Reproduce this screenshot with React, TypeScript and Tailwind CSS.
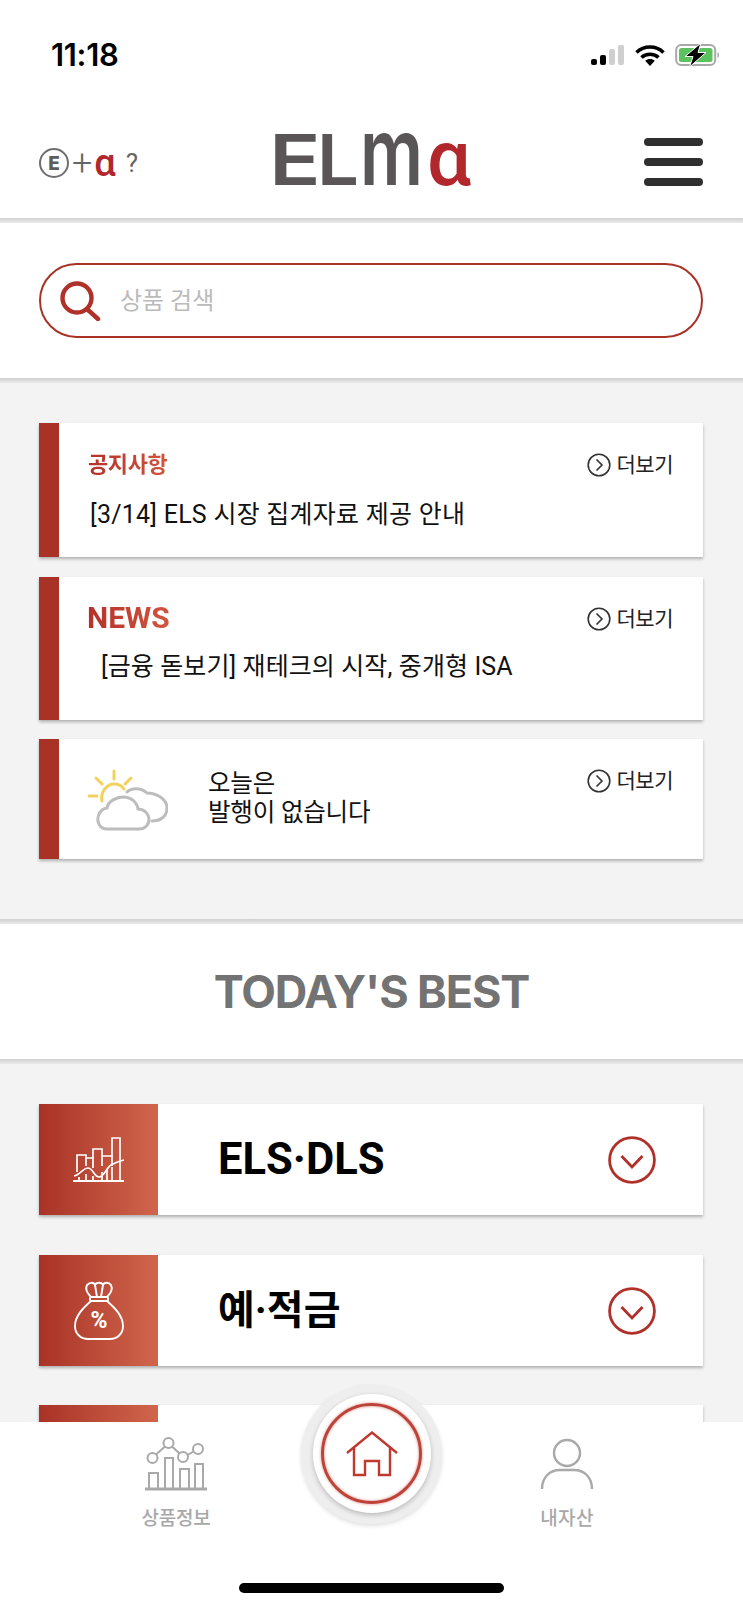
import React from "react";

function Wifi() {
  return (
    <svg width="30" height="21" viewBox="0 0 30 21" fill="none" stroke="#000" strokeWidth="3.6">
      <path d="M1.5 7.5C9 0.2 21 0.2 28.5 7.5" />
      <path d="M6.5 12.5C11 8.2 19 8.2 23.5 12.5" />
      <path d="M15 21l-4.8-5.2c2.6-2.4 7-2.4 9.6 0z" fill="#000" stroke="none" />
    </svg>
  );
}

function Battery() {
  return (
    <svg width="46" height="24" viewBox="0 0 46 24" fill="none">
      <rect x="1.2" y="2" width="39" height="20" rx="5" stroke="#a8a8a8" strokeWidth="2" />
      <rect x="4" y="5" width="33.5" height="14" rx="2.5" fill="#5cc25f" />
      <path d="M42.5 9c2 .6 2 5.4 0 6z" fill="#a8a8a8" />
      <path d="M26 0L10 13.5h8L14.5 24 31 9.5h-8z" fill="#000" stroke="#fff" strokeWidth="1" />
    </svg>
  );
}

function MoreLink() {
  return (
    <div className="flex items-center gap-[6px] text-[21px] leading-[24px] text-[#222]">
      <svg width="24" height="24" viewBox="0 0 24 24" fill="none" stroke="#333" strokeWidth="1.6">
        <circle cx="12" cy="12" r="10.8" />
        <path d="M9.5 6.5l5.5 5.5-5.5 5.5" />
      </svg>
      <span className="tracking-[-0.5px]">더보기</span>
    </div>
  );
}

function Divider() {
  return <div className="h-[5px] bg-linear-to-b from-[#d0d0d0] to-[#ebebeb]" />;
}

function Card({ className, children }: { className: string; children: React.ReactNode }) {
  return (
    <div className={`flex bg-white shadow-[0_2px_3px_rgba(0,0,0,0.28)] ${className}`}>
      <div className="w-[20px] shrink-0 bg-[#a93226]" />
      <div className="flex-1">{children}</div>
    </div>
  );
}

function ChartIcon() {
  return (
    <svg width="51" height="46" viewBox="0 0 51 46" fill="none" stroke="#fff" strokeWidth="1.7">
      <path d="M0 44h51" strokeWidth="2.2" />
      <path d="M4 35V18h9v3h7V12h9v7h10V1h8v43" />
      <path d="M13 21v8M20 21v10M29 19v10M39 19v10" />
      <path d="M6 40v4M13 37v7M20 39v5M29 35v9M34 33v11M39 30v14" />
      <path d="M1 39c6-1 9-8 14-8s6 9 11 9 8-10 12-12 7-4 13-5" />
    </svg>
  );
}

function BagIcon() {
  return (
    <svg width="50" height="59" viewBox="0 0 50 59" fill="none" stroke="#fff" strokeWidth="1.9" strokeLinejoin="round">
      <path d="M17 16c-3-3-6-8-4-12 3-3 7-3 8 0 1-3 7-3 8 0 1-3 6-3 8 0 2 4-1 9-4 12" />
      <path d="M21 4l2 12M29 4l-2 12" />
      <rect x="16" y="16" width="18" height="4" rx="1" />
      <path d="M17 20C9 27 1 35 1 45c0 8 6 13 13 13h22c7 0 13-5 13-13 0-10-8-18-16-25" />
      <text x="25" y="47" textAnchor="middle" fill="#fff" stroke="none" fontSize="23" fontWeight="700" fontFamily="Roboto, sans-serif">%</text>
    </svg>
  );
}

function Chevron() {
  return (
    <svg width="48" height="48" viewBox="0 0 48 48" fill="none" stroke="#b0302a" strokeWidth="2.8">
      <circle cx="24" cy="24" r="22.4" />
      <path d="M13.5 20L24 31l10.5-11" />
    </svg>
  );
}

function BestCard({ icon, label, className, labelClass }: { icon: React.ReactNode; label: string; className: string; labelClass: string }) {
  return (
    <div className={`flex h-[111px] shrink-0 bg-white shadow-[0_2px_3px_rgba(0,0,0,0.28)] ${className}`}>
      <div className="flex w-[119px] shrink-0 items-center justify-center bg-linear-to-r from-[#a93226] to-[#d0654c]">{icon}</div>
      <div className="flex flex-1 items-center justify-between pl-[60px] pr-[47px]">
        <span className={`font-bold leading-none text-black ${labelClass}`}>{label}</span>
        <Chevron />
      </div>
    </div>
  );
}

export default function App() {
  return (
    <div className="relative h-[1609px] w-[743px] overflow-hidden bg-white font-[Roboto,'Noto_Sans_CJK_KR',sans-serif]">
      {/* status bar */}
      <div className="flex h-[108px] items-start justify-between pl-[51px] pr-[22px] pt-[38px]">
        <span className="font-[Inter] text-[31px] font-semibold leading-[34px] tracking-[-0.3px] text-black">11:18</span>
        <div className="flex items-center pt-[5px]">
          <div className="flex items-end gap-[3px]">
            <div className="h-[6px] w-[6px] rounded-[2px] bg-black" />
            <div className="h-[10px] w-[6px] rounded-[2px] bg-black" />
            <div className="h-[16px] w-[6px] rounded-[2px] bg-[#cfcfcf]" />
            <div className="h-[20px] w-[6px] rounded-[2px] bg-[#cfcfcf]" />
          </div>
          <div className="ml-[11px]"><Wifi /></div>
          <div className="ml-[10px]"><Battery /></div>
        </div>
      </div>

      {/* header */}
      <div className="flex h-[110px] items-start pl-[39px] pr-[40px]">
        <div className="flex w-[230px] items-center pt-[40px]">
          <div className="flex h-[30px] w-[30px] items-center justify-center rounded-full border-2 border-[#6e6e6e] font-[Inter] text-[19px] font-extrabold leading-none text-[#5c5c5c]">E</div>
          <span className="ml-[3px] text-[36px] font-light leading-[30px] text-[#666]">+</span>
          <span className="ml-[2px] text-[38px] font-medium leading-[30px] text-[#b1272b]">α</span>
          <span className="ml-[10px] text-[26px] leading-[30px] text-[#666]">?</span>
        </div>
        <div className="flex w-[210px] items-baseline pt-[16px] font-[Inter] text-[70px] font-semibold leading-[70px] text-[#5a5556]">
          <span className="inline-block w-[48px] origin-[0%_86%] scale-x-[1.22]">E</span>
          <span className="inline-block w-[43px] origin-[0%_86%] scale-x-[1.06]">L</span>
          <span className="inline-block w-[67px] origin-[0%_86%] scale-y-[1.33]">m</span>
          <span className="font-[Roboto] text-[78px] font-medium leading-[70px] text-[#b1272b]">α</span>
        </div>
        <div className="ml-auto flex w-[59px] flex-col gap-[12px] pt-[30px]">
          <div className="h-[8px] rounded-full bg-[#2f2f2f]" />
          <div className="h-[8px] rounded-full bg-[#2f2f2f]" />
          <div className="h-[8px] rounded-full bg-[#2f2f2f]" />
        </div>
      </div>
      <Divider />

      {/* search */}
      <div className="flex h-[155px] flex-col pl-[39px] pr-[40px] pt-[40px]">
        <div className="flex h-[75px] items-center rounded-full border-2 border-[#a93226] pl-[19px]">
          <svg width="41" height="40" viewBox="0 0 41 40" fill="none" stroke="#b0302a" strokeWidth="4.4">
            <circle cx="17" cy="17" r="14.5" />
            <path d="M27 28l11 10" strokeLinecap="round" />
          </svg>
          <span className="ml-[19px] text-[24px] leading-none text-[#bbbbbb]">상품 검색</span>
        </div>
      </div>
      <Divider />

      {/* notices */}
      <div className="flex h-[536px] flex-col bg-[#f3f3f3] pl-[39px] pr-[40px] pt-[40px]">
        <Card className="h-[134px]">
          <div className="flex items-center justify-between pl-[29px] pr-[30px] pt-[29px]">
            <span className="bg-linear-to-r from-[#b5302a] to-[#d0553f] bg-clip-text text-[22px] font-bold leading-[26px] tracking-[-0.4px] text-transparent">공지사항</span>
            <MoreLink />
          </div>
          <div className="pl-[31px] pt-[21px] text-[25px] leading-[32px] tracking-[0.25px] text-[#111]">[3/14] ELS 시장 집계자료 제공 안내</div>
        </Card>
        <Card className="mt-[20px] h-[143px]">
          <div className="flex items-center justify-between pl-[28px] pr-[30px] pt-[29px]">
            <span className="-mt-[1px] bg-linear-to-r from-[#b5302a] to-[#d0553f] bg-clip-text text-[30px] font-bold leading-[26px] text-transparent">NEWS</span>
            <MoreLink />
          </div>
          <div className="pl-[42px] pt-[20px] text-[25px] leading-[32px] tracking-[0.1px] text-[#111]">[금융 돋보기] 재테크의 시작, 중개형 ISA</div>
        </Card>
        <Card className="mt-[19px] h-[120px]">
          <div className="flex items-start justify-between pl-[29px] pr-[30px] pt-[30px]">
            <div className="flex">
              <svg width="80" height="62" viewBox="19 18 80 62" fill="none" strokeWidth="3" strokeLinecap="round">
                <g stroke="#f2d15c">
                  <path d="M33 50c-2-9 5-17 12-17 4 0 8 2 10 5" />
                  <path d="M45 20v8M27 27l6 6M62 27l-6 6M20 45h8" />
                </g>
                <g stroke="#bdbdbd">
                  <path d="M38 78c-8 0-10-8-9-12 1-6 6-9 9-9 1-7 10-11 16-11 8 0 14 5 15 12 7 0 11 6 11 10 0 6-4 10-10 10z" />
                  <path d="M58 41c4-4 14-5 20 1 8 0 20 5 20 15 0 8-6 13-15 13" />
                </g>
              </svg>
              <div className="ml-[40px] text-[24.5px] leading-[29px] tracking-[-0.2px] text-[#111]">
                <div>오늘은</div>
                <div>발행이 없습니다</div>
              </div>
            </div>
            <MoreLink />
          </div>
        </Card>
      </div>
      <Divider />

      {/* today's best */}
      <div className="flex h-[135px] items-center justify-center font-[Inter] text-[45px] font-bold leading-none tracking-[-1.1px] text-[#737373]">
        TODAY'S BEST
      </div>
      <Divider />
      <div className="flex h-[545px] flex-col bg-[#f3f3f3] pl-[39px] pr-[40px] pt-[40px]">
        <BestCard icon={<ChartIcon />} label="ELS·DLS" className="" labelClass="text-[43.5px]" />
        <BestCard icon={<BagIcon />} label="예·적금" className="mt-[40px]" labelClass="text-[40px]" />
        <BestCard icon={null} label="" className="mt-[39px]" labelClass="text-[40px]" />
      </div>

      {/* bottom nav */}
      <div className="absolute inset-x-0 bottom-0 flex h-[187px] flex-col bg-white">
        <div className="flex justify-between px-[126px] pt-[15px]">
          <div className="flex w-[100px] flex-col items-center">
            <svg width="62" height="54" viewBox="0 0 62 54" fill="none" stroke="#a9a9a9" strokeWidth="2">
              <circle cx="7.5" cy="21" r="5" />
              <circle cx="23.5" cy="6" r="5" />
              <circle cx="38" cy="20" r="5" />
              <circle cx="53" cy="12" r="5" />
              <path d="M11 17.5l9-8M27 9.5l7.5 7M42.5 18l6-3.5" />
              <path d="M4 51V36h9v15M20 51V21h8v30M35 51V32h9v19M50 51V27h8v24" />
              <path d="M0 52h62" strokeWidth="3" />
            </svg>
            <span className="mt-[17px] text-[19px] font-medium leading-[22px] tracking-[-0.2px] text-[#a8a8a8]">상품정보</span>
          </div>
          <div className="flex w-[100px] flex-col items-center">
            <svg width="54" height="54" viewBox="0 0 54 54" fill="none" stroke="#a9a9a9" strokeWidth="2.4">
              <circle cx="27" cy="16" r="13" />
              <path d="M2 52c0-12 8-19 18-19h14c10 0 18 7 18 19" />
            </svg>
            <span className="mt-[17px] text-[19px] font-medium leading-[22px] tracking-[0.4px] text-[#a8a8a8]">내자산</span>
          </div>
        </div>
        <div className="mt-auto mb-[16px] h-[10px] w-[265px] self-center rounded-full bg-black" />
      </div>

      {/* home button */}
      <div className="absolute left-[301px] top-[1385px] flex h-[139px] w-[141px] items-center justify-center rounded-full bg-[#eeeeee] shadow-[0_2px_4px_rgba(0,0,0,0.12)]">
        <div className="-mt-[2px] flex h-[119px] w-[118px] items-center justify-center rounded-full bg-white shadow-[0_2px_5px_rgba(0,0,0,0.22)]">
          <div className="flex h-[101px] w-[101px] items-center justify-center rounded-full border-[3px] border-[#bd4238] shadow-[0_0_3px_rgba(200,90,75,0.7),inset_0_0_3px_rgba(200,90,75,0.7)]">
            <svg width="52" height="46" viewBox="0 0 52 46" fill="none" stroke="#c0392f" strokeWidth="2.4">
              <path d="M1 22L26 1.5 51 22" />
              <path d="M8 17v27h11V30h14v14h11V17" />
            </svg>
          </div>
        </div>
      </div>
    </div>
  );
}
